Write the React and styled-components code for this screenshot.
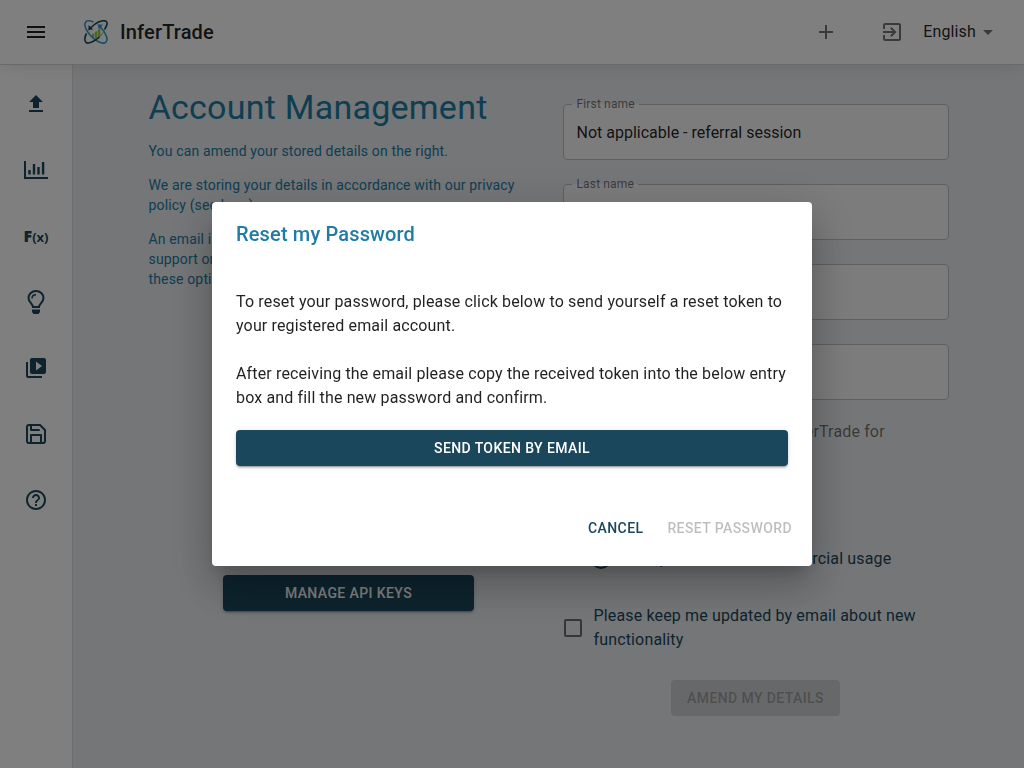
import React from "react";
import styled, { createGlobalStyle, css } from "styled-components";
import {
  MdMenu,
  MdAdd,
  MdExitToApp,
  MdArrowDropDown,
  MdVideoLibrary,
  MdHelpOutline,
} from "react-icons/md";
import { FiSave } from "react-icons/fi";

const navy = "#1a475b";
const blue = "#217ca3";
const ink = "rgba(0, 0, 0, 0.87)";
const muted = "rgba(0, 0, 0, 0.54)";

const GlobalStyle = createGlobalStyle`
  *, *::before, *::after { box-sizing: border-box; }
  body {
    margin: 0;
    background: #ebedf0;
    color: ${ink};
    font-family: Roboto, "Liberation Sans", sans-serif;
    font-size: 16px;
    line-height: 24px;
    letter-spacing: 0.00938em;
  }
  button, input { font: inherit; letter-spacing: inherit; }
  p, h1, h2 { margin: 0; }
`;

const Page = styled.div`
  display: flex;
  flex-direction: column;
  min-height: 100vh;
`;

const Header = styled.header`
  position: relative;
  z-index: 1;
  display: flex;
  align-items: center;
  height: 65px;
  padding: 0 24px;
  background: #fff;
  border-bottom: 1px solid #d4d4d4;
  box-shadow: 0 4px 20px -4px rgba(0, 0, 0, 0.12);
`;

const IconButton = styled.button`
  display: flex;
  padding: 0;
  border: 0;
  background: none;
  color: ${(p) => p.$color || muted};
  cursor: pointer;
`;

const Brand = styled.a`
  display: flex;
  align-items: center;
  gap: 12px;
  margin-left: 36px;
  color: ${ink};
  font-size: 20px;
  font-weight: 500;
  letter-spacing: 0.0075em;
  text-decoration: none;
`;

const Tools = styled.div`
  display: flex;
  align-items: center;
  margin-left: auto;
  gap: 42px;
`;

const Session = styled.div`
  display: flex;
  align-items: center;
  gap: 19px;
`;

const Language = styled.button`
  display: flex;
  align-items: center;
  padding: 0;
  border: 0;
  background: none;
  color: ${ink};
  letter-spacing: 0.00938em;

  svg { color: ${muted}; }
`;

const Body = styled.div`
  display: flex;
  flex: 1;
`;

const Sidebar = styled.nav`
  display: flex;
  flex: none;
  flex-direction: column;
  align-items: center;
  gap: 42px;
  width: 73px;
  padding-top: 27px;
  background: #fff;
  border-right: 1px solid #dcdcdc;
`;

const NavLink = styled.a`
  display: flex;
  align-items: center;
  justify-content: center;
  width: 24px;
  height: 24px;
  color: ${navy};
  text-decoration: none;
`;

const FxLabel = styled.span`
  font-family: "Open Sans", "Noto Sans", sans-serif;
  font-size: 13px;
  font-weight: 700;
  letter-spacing: normal;

  b { font-size: 16px; }
`;

const Main = styled.main`
  display: grid;
  flex: 1;
  grid-template-columns: 1fr 1fr;
  align-items: start;
  max-width: 800px;
  margin: 0 auto;
  padding-bottom: 24px;
`;

const Intro = styled.section`
  padding-top: 21px;
  color: ${blue};
  font-size: 14px;
  line-height: 20px;
  letter-spacing: 0.01071em;

  h1 {
    margin-bottom: 13px;
    font-size: 34px;
    font-weight: 400;
    line-height: 42px;
    letter-spacing: 0.00735em;
  }
  p { margin-bottom: 14px; }
  a { color: inherit; text-decoration: none; }
`;

const ButtonStack = styled.div`
  display: flex;
  flex-direction: column;
  gap: 24px;
  width: 251px;
  margin: 166px auto 0;
`;

const Button = styled.button`
  height: 36px;
  padding: 0 ${(p) => (p.$variant === "text" ? 8 : 16)}px;
  border: 0;
  border-radius: 4px;
  background: none;
  color: ${navy};
  font-size: 14px;
  font-weight: 500;
  letter-spacing: 0.02857em;
  text-transform: uppercase;
  cursor: pointer;

  ${(p) =>
    p.$variant !== "text" &&
    css`
      background: ${navy};
      color: #fff;
      box-shadow: 0 3px 1px -2px rgba(0, 0, 0, 0.2), 0 2px 2px rgba(0, 0, 0, 0.14),
        0 1px 5px rgba(0, 0, 0, 0.12);
    `}

  &:disabled {
    color: rgba(0, 0, 0, 0.26);
    box-shadow: none;
    cursor: default;
    ${(p) => p.$variant !== "text" && "background: rgba(0, 0, 0, 0.12);"}
  }
`;

const Form = styled.form`
  display: flex;
  flex-direction: column;
  padding: 31px 0 0 14px;
`;

const FieldList = styled.div`
  display: flex;
  flex-direction: column;
  gap: 16px;
`;

const FieldBox = styled.fieldset`
  min-width: 0;
  margin: 0;
  padding: 0 8px 6px;
  border: 1px solid #c0c0c0;
  border-radius: 4px;
  background: #f8f8f8;

  legend {
    padding: 0 4px 0 5px;
    color: ${muted};
    font-size: 12px;
    line-height: 16px;
  }
  label { display: block; }
  input {
    display: block;
    width: 100%;
    height: 41px;
    padding: 0 5px;
    border: 0;
    outline: 0;
    background: none;
    color: ${ink};
    letter-spacing: normal;
  }
`;

const Usage = styled.fieldset`
  min-width: 0;
  margin: 20px 0 0;
  padding: 0;
  border: 0;
  color: ${navy};

  legend {
    padding: 0 0 10px;
    color: ${muted};
  }
`;

const Option = styled.label`
  display: flex;
  align-items: center;
  gap: 11px;
  height: 42px;
  padding-left: 28px;
`;

const Radio = styled.input.attrs({ type: "radio" })`
  appearance: none;
  width: 20px;
  height: 20px;
  margin: 0;
  border: 2px solid ${muted};
  border-radius: 50%;

  &:checked {
    border-color: ${navy};
    background: radial-gradient(${navy} 5px, transparent 6px);
  }
`;

const Consent = styled.label`
  display: flex;
  align-items: center;
  gap: 12px;
  margin: 24px 0 28px;
  padding-left: 1px;
  color: ${navy};
`;

const Checkbox = styled.input.attrs({ type: "checkbox" })`
  appearance: none;
  flex: none;
  width: 18px;
  height: 18px;
  margin: 0;
  border: 2px solid ${muted};
  border-radius: 2px;
`;

const Submit = styled(Button)`
  align-self: center;
`;

const Backdrop = styled.div`
  position: fixed;
  inset: 0;
  z-index: 2;
  display: flex;
  align-items: center;
  justify-content: center;
  padding: 32px;
  background: rgba(0, 0, 0, 0.5);
`;

const Dialog = styled.div`
  width: 100%;
  max-width: 600px;
  border-radius: 4px;
  background: #fff;
  box-shadow: 0 11px 15px -7px rgba(0, 0, 0, 0.2), 0 24px 38px 3px rgba(0, 0, 0, 0.14),
    0 9px 46px 8px rgba(0, 0, 0, 0.12);

  h2 {
    padding: 16px 24px;
    color: ${blue};
    font-size: 20px;
    font-weight: 500;
    line-height: 32px;
    letter-spacing: 0.0075em;
  }
`;

const DialogContent = styled.div`
  display: flex;
  flex-direction: column;
  gap: 24px;
  padding: 24px 24px 20px;
`;

const DialogAction = styled.div`
  display: flex;
  flex-direction: column;
  padding: 0 24px 44px;
`;

const DialogFooter = styled.footer`
  display: flex;
  justify-content: flex-end;
  gap: 8px;
  padding: 0 12px 20px;
`;

const Logo = () => (
  <svg width="24" height="24" viewBox="0 0 24 24" fill="none" aria-hidden="true">
    <path d="M8 14l2.300-1v4.500L8 16.500zM11 12l2.300-1v7l-1.300 1-1-.8zM14 10l2.300-1.500v8L14 18z" fill="#9bc53d" />
    <path d="M9.500 2C5.500 .2 2 .3 1.200 3C.3 6 2.500 11 6.500 15.500C11.500 21 18 24.500 21.500 22.500C25 20 22 13 16 6.500" stroke="#2e9ccc" strokeWidth="1.600" />
    <path d="M13.500 4.200L19 4.800L14.800 9.500Z" fill="#2e9ccc" />
    <path d="M20.500 9.500C23 6 24 2.500 22 1.200C18.500 -.5 12 2.500 7 7.500" stroke={navy} strokeWidth="1.600" />
    <path d="M2.500 13.500C.5 17 .2 21 2 22.500C4.500 24.200 10.500 21.500 15.500 17" stroke={navy} strokeWidth="1.600" />
    <path d="M15.500 17C18 14.800 19.500 12 20.500 9.500" stroke="#8a9aa3" strokeWidth="1" />
    <path d="M4.300 10.200L4.600 5L9.200 9.300Z" fill={navy} />
  </svg>
);

const UploadIcon = () => (
  <svg width="24" height="24" viewBox="0 0 24 24" fill="currentColor" aria-hidden="true">
    <path d="M9 16h6v-6h4l-7-7-7 7h4zM5 18h14v2H5z" />
  </svg>
);

const ChartIcon = () => (
  <svg width="24" height="24" viewBox="0 0 24 24" fill="currentColor" aria-hidden="true">
    <path d="M0 3h2v16h22v2H0zM4.300 12h2.400v4.500H4.300zM8.800 6h2.400v10.500H8.800zM13.300 9h2.400v7.500h-2.400zM17.900 4h2.400v12.500h-2.400z" />
  </svg>
);

const BulbIcon = () => (
  <svg width="24" height="24" viewBox="0 0 24 24" fill="none" stroke="currentColor" aria-hidden="true">
    <path d="M9 17C9 14 4.500 12.500 4.500 8A7.500 7 0 0 1 19.500 8C19.500 12.500 15 14 15 17Z" strokeWidth="2" />
    <path d="M8 8.500C8 6.500 9.500 4.800 12 4.800" strokeWidth="1.500" />
    <path d="M8 19.500H16V22L14.500 24H9.500L8 22Z" fill="currentColor" stroke="none" />
  </svg>
);

const navItems = [
  { name: "Upload", icon: <UploadIcon /> },
  { name: "Charts", icon: <ChartIcon /> },
  { name: "Functions", icon: <FxLabel><b>F</b>(x)</FxLabel> },
  { name: "Ideas", icon: <BulbIcon /> },
  { name: "Videos", icon: <MdVideoLibrary size={24} /> },
  { name: "Saved", icon: <FiSave size={24} /> },
  { name: "Help", icon: <MdHelpOutline size={24} /> },
];

const fields = [
  { id: "first-name", label: "First name", value: "Not applicable - referral session" },
  { id: "last-name", label: "Last name", value: "" },
  { id: "email", label: "Email", value: "" },
  { id: "company", label: "Company", value: "" },
];

const Field = ({ id, label, value }) => (
  <FieldBox>
    <legend>
      <label htmlFor={id}>{label}</label>
    </legend>
    <input id={id} type="text" defaultValue={value} />
  </FieldBox>
);

export default function App() {
  return (
    <>
      <GlobalStyle />
      <Page>
        <Header>
          <IconButton $color={ink} aria-label="Menu">
            <MdMenu size={24} />
          </IconButton>
          <Brand href="#">
            <Logo />
            InferTrade
          </Brand>
          <Tools>
            <IconButton aria-label="Add">
              <MdAdd size={24} />
            </IconButton>
            <Session>
              <IconButton aria-label="Log out">
                <MdExitToApp size={24} />
              </IconButton>
              <Language>
                English
                <MdArrowDropDown size={24} />
              </Language>
            </Session>
          </Tools>
        </Header>
        <Body>
          <Sidebar>
            {navItems.map((item) => (
              <NavLink key={item.name} href="#" aria-label={item.name}>
                {item.icon}
              </NavLink>
            ))}
          </Sidebar>
          <Main>
            <Intro>
              <h1>Account Management</h1>
              <p>You can amend your stored details on the right.</p>
              <p>
                We are storing your details in accordance with our privacy policy (see{" "}
                <a href="#">here</a>).
              </p>
              <p>
                An email is required so that we can provide you with the support or reset
                your password. Please contact us regarding these options.
              </p>
              <ButtonStack>
                <Button>Reset password</Button>
                <Button>Delete account</Button>
                <Button>Manage API keys</Button>
              </ButtonStack>
            </Intro>
            <Form>
              <FieldList>
                {fields.map((field) => (
                  <Field key={field.id} {...field} />
                ))}
              </FieldList>
              <Usage>
                <legend>I am intending to primarily use InferTrade for</legend>
                <Option>
                  <Radio name="usage" />
                  Personal usage
                </Option>
                <Option>
                  <Radio name="usage" />
                  Commercial usage
                </Option>
                <Option>
                  <Radio name="usage" defaultChecked />
                  Both personal and commercial usage
                </Option>
              </Usage>
              <Consent>
                <Checkbox />
                Please keep me updated by email about new functionality
              </Consent>
              <Submit disabled>Amend my details</Submit>
            </Form>
          </Main>
        </Body>
      </Page>
      <Backdrop>
        <Dialog role="dialog" aria-modal="true" aria-labelledby="dialog-title">
          <h2 id="dialog-title">Reset my Password</h2>
          <DialogContent>
            <p>
              To reset your password, please click below to send yourself a reset token to
              your registered email account.
            </p>
            <p>
              After receiving the email please copy the received token into the below entry
              box and fill the new password and confirm.
            </p>
          </DialogContent>
          <DialogAction>
            <Button>Send token by email</Button>
          </DialogAction>
          <DialogFooter>
            <Button $variant="text">Cancel</Button>
            <Button $variant="text" disabled>
              Reset password
            </Button>
          </DialogFooter>
        </Dialog>
      </Backdrop>
    </>
  );
}
